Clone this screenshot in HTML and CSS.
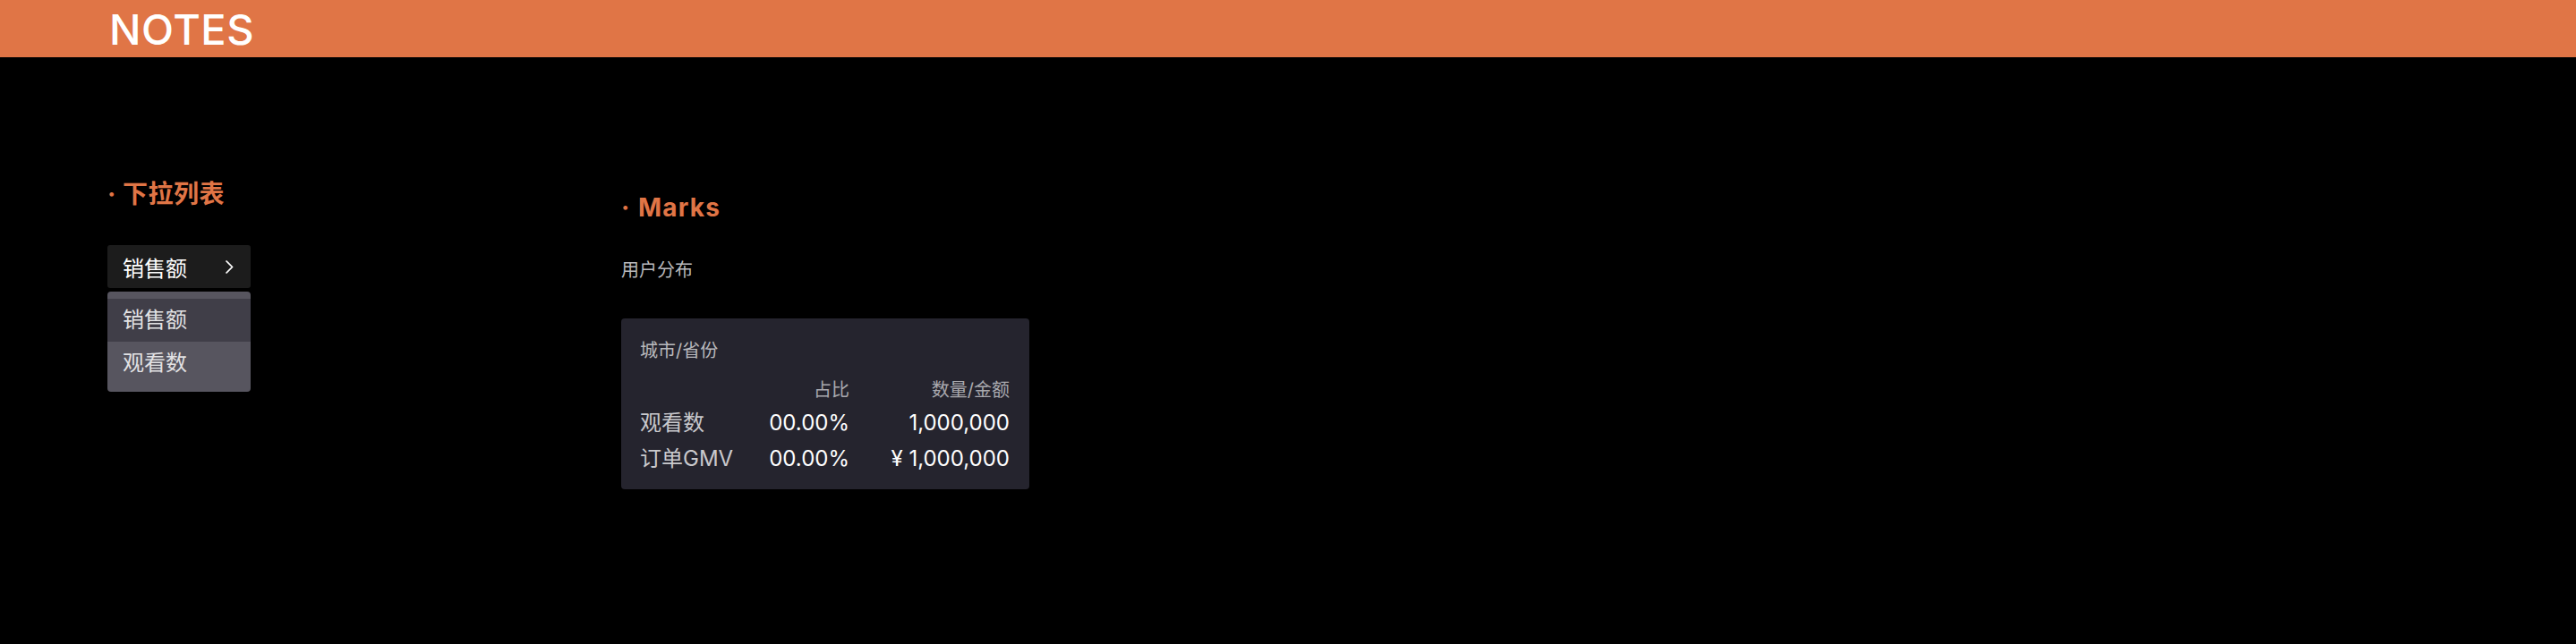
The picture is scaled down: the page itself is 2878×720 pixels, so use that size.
FILE: index.html
```html
<!DOCTYPE html>
<html lang="zh">
<head>
<meta charset="utf-8">
<title>Notes</title>
<link rel="stylesheet" href="styles.css">
</head>
<body>
<header class="topbar">
  <h1 class="brand">NOTES</h1>
</header>
<main class="content">
  <section class="col-left">
    <h2 class="sec-title"><span class="bullet">·</span>下拉列表</h2>
    <div class="dropdown">
      <div class="dd-button">
        <span>销售额</span>
        <svg class="chev" width="10" height="17" viewBox="0 0 10 17"><path d="M1.5 1.5 L8.5 8.5 L1.5 15.5" fill="none" stroke="#fff" stroke-width="1.6"/></svg>
      </div>
      <ul class="dd-menu">
        <li class="dd-item active">销售额</li>
        <li class="dd-item">观看数</li>
      </ul>
    </div>
  </section>
  <section class="col-right">
    <h2 class="sec-title marks"><span class="bullet wide">·</span>Marks</h2>
    <p class="subtitle">用户分布</p>
    <div class="card">
      <div class="card-title">城市/省份</div>
      <div class="grid">
        <div class="head"></div>
        <div class="head num">占比</div>
        <div class="head num">数量/金额</div>
        <div class="lbl">观看数</div>
        <div class="val">00.00%</div>
        <div class="val">1,000,000</div>
        <div class="lbl">订单GMV</div>
        <div class="val">00.00%</div>
        <div class="val">¥ 1,000,000</div>
      </div>
    </div>
  </section>
</main>
</body>
</html>
```

FILE: styles.css
```css
* { box-sizing: border-box; }
html, body {
  margin: 0;
  padding: 0;
  background: #000;
  font-family: Inter, "Noto Sans CJK SC", sans-serif;
  color: #fff;
}
.topbar {
  height: 64px;
  background: #e07546;
  padding-left: 122px;
  display: flex;
  align-items: center;
}
.brand {
  margin: 0;
  font-size: 47px;
  font-weight: 500;
  line-height: 63px;
  letter-spacing: 0.5px;
  color: #fff;
}
.content {
  display: flex;
  padding-left: 120px;
}
.col-left {
  width: 574px;
  padding-top: 133px;
}
.col-right {
  padding-top: 148px;
}
.sec-title {
  margin: 0;
  font-size: 28px;
  line-height: 40px;
  font-weight: 700;
  color: #e07546;
  letter-spacing: 0.5px;
  font-family: Inter, "Noto Sans CJK SC", sans-serif;
}
.sec-title.marks { letter-spacing: 1.2px; }
.bullet {
  display: inline-block;
  width: 17px;
  font-weight: 700;
  text-align: left;
}
.bullet.wide { width: 19px; }
.dropdown {
  margin-top: 37px;
  width: 160px;
}
.dd-button {
  height: 48px;
  background: #1c1c1c;
  border-radius: 3px;
  display: flex;
  align-items: center;
  justify-content: space-between;
  padding: 0 19px 0 17px;
  font-size: 24px;
  color: #fff;
}
.chev { display: block; }
.dd-menu {
  list-style: none;
  margin: 4px 0 0;
  padding: 8px 0;
  background: #57555f;
  border-radius: 4px;
}
.dd-item {
  height: 48px;
  line-height: 48px;
  padding-left: 17px;
  font-size: 24px;
  color: #e2e2e4;
}
.dd-item.active {
  background: #403e48;
}
.subtitle {
  margin: 36px 0 0;
  font-size: 20px;
  line-height: 28px;
  color: #b9b9bd;
}
.card {
  margin-top: 40px;
  width: 456px;
  background: #25242e;
  border-radius: 4px;
  padding: 22px 22px 14px 21px;
}
.card-title {
  font-size: 20px;
  line-height: 28px;
  color: #b9b9bd;
}
.grid {
  margin-top: 16px;
  display: grid;
  grid-template-columns: 124px 110px 179px;
}
.head {
  font-size: 20px;
  line-height: 28px;
  color: #a9a9ae;
  margin-bottom: 3px;
}
.num { text-align: right; }
.lbl {
  font-size: 24px;
  line-height: 40px;
  color: #c9c9cd;
  white-space: nowrap;
}
.val {
  font-size: 24px;
  line-height: 40px;
  color: #fff;
  text-align: right;
  white-space: nowrap;
}
```
